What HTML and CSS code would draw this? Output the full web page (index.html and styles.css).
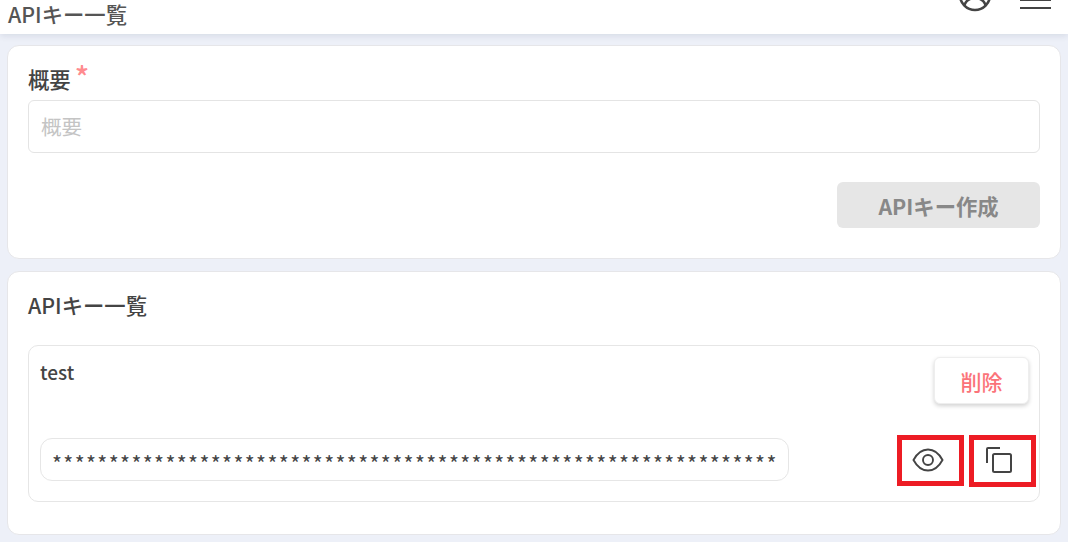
FILE: index.html
```html
<!DOCTYPE html>
<html lang="ja">
<head>
    <meta charset="UTF-8">
    <link rel="stylesheet" href="styles.css">
</head>
<body>
    <header class="top-bar">
        <span class="top-title">APIキー一覧</span>
        <div class="top-icons">
            <svg class="user-icon" width="34" height="34" viewBox="0 0 34 34" fill="none" stroke="#444" stroke-width="2.6">
                <circle cx="17" cy="17" r="15"/>
                <circle cx="17" cy="13" r="6"/>
                <path d="M6 28c2-6 7-8 11-8s9 2 11 8"/>
            </svg>
            <div class="menu-icon"><span></span><span></span></div>
        </div>
    </header>

    <main class="content">
        <section class="card card-form">
            <label class="field-label">概要<span class="required">*</span></label>
            <div class="text-input">概要</div>
            <div class="form-actions">
                <button class="create-btn">APIキー作成</button>
            </div>
        </section>

        <section class="card card-list">
            <h2 class="list-title">APIキー一覧</h2>
            <div class="key-item">
                <div class="key-top">
                    <span class="key-name">test</span>
                    <button class="delete-btn">削除</button>
                </div>
                <div class="key-bottom">
                    <div class="key-value">****************************************************************</div>
                    <div class="icon-box box-eye">
                        <svg width="32" height="32" viewBox="0 0 32 32" fill="none" stroke="#444" stroke-width="1.9">
                            <path d="M1.5 15C5 8.500 10 4.500 16 4.500S27 8.500 30.500 15C27 21.500 22 25.500 16 25.500S5 21.500 1.500 15Z"/>
                            <circle cx="16" cy="15" r="5"/>
                        </svg>
                    </div>
                    <div class="icon-box box-copy">
                        <svg width="30" height="30" viewBox="0 0 30 30" fill="none" stroke="#444" stroke-width="2">
                            <path d="M2 17V3a1 1 0 0 1 1-1H15"/>
                            <rect x="8" y="8" width="18" height="18" rx="1.500"/>
                        </svg>
                    </div>
                </div>
            </div>
        </section>
    </main>
</body>
</html>
```

FILE: styles.css
```css
* {
    box-sizing: border-box;
}
html, body {
    height: 100%;
}
body {
    margin: 0;
    background: #edf0f8;
    color: #444;
    font-family: "Noto Sans CJK JP", "Noto Sans", sans-serif;
    overflow: hidden;
}
.top-bar {
    height: 34px;
    background: #fff;
    display: flex;
    justify-content: space-between;
    align-items: flex-end;
    padding: 0 17px 0 8px;
    box-shadow: 0 2px 6px rgba(60,70,110,0.12);
    overflow: hidden;
}
.top-title {
    font-size: 21.33px;
    font-weight: 500;
    line-height: 26px;
    margin-bottom: 7px;
    color: #555;
}
.top-icons {
    display: flex;
    gap: 28px;
    margin-bottom: 23px;
    align-items: flex-end;
}
.user-icon {
    display: block;
    margin-bottom: -1px;
}
.menu-icon {
    width: 31px;
    display: flex;
    flex-direction: column;
    gap: 6px;
    margin-bottom: 2px;
}
.menu-icon span {
    display: block;
    height: 2px;
    background: #444;
}
.content {
    padding: 11px 7px 0;
    display: flex;
    flex-direction: column;
    gap: 12px;
}
.card {
    background: #fff;
    border: 1px solid #e6e6e9;
    border-radius: 12px;
    padding: 0 20px;
}
.card-form {
    height: 214px;
    padding-top: 17px;
}
.card-list {
    height: 264px;
    padding-top: 18px;
}
.field-label {
    display: block;
    font-size: 21.33px;
    font-weight: 500;
    line-height: 30px;
    height: 37px;
    padding-top: 1px;
}
.required {
    color: #ff8b8f;
    margin-left: 4px;
    font-size: 30px;
    line-height: 20px;
    vertical-align: -1px;
}
.text-input {
    height: 53px;
    border: 1px solid #e4e4e4;
    border-radius: 6px;
    padding: 0 12px;
    line-height: 51px;
    font-size: 20.5px;
    color: #c4c4c4;
}
.form-actions {
    display: flex;
    justify-content: flex-end;
    margin-top: 29px;
}
.create-btn {
    width: 203px;
    height: 46px;
    border: 0;
    border-radius: 6px;
    background: #e6e6e6;
    color: #888;
    font-family: inherit;
    font-size: 21.33px;
    font-weight: 700;
    padding: 0;
}
.list-title {
    margin: 0;
    font-size: 21.33px;
    font-weight: 500;
    line-height: 30px;
    color: #444;
}
.key-item {
    margin-top: 25px;
    height: 157px;
    border: 1px solid #e6e6e6;
    border-radius: 10px;
    padding: 11px 10px 0 11px;
}
.key-top {
    display: flex;
    justify-content: space-between;
    align-items: flex-start;
    height: 81px;
}
.key-name {
    font-size: 19px;
    font-weight: 500;
    line-height: 30px;
}
.delete-btn {
    width: 95px;
    height: 47px;
    background: #fff;
    border: 1px solid #eee;
    border-radius: 6px;
    box-shadow: 0 2px 4px rgba(0,0,0,0.18);
    color: #fb7379;
    font-family: inherit;
    font-size: 21px;
    font-weight: 500;
    padding: 0;
}
.key-bottom {
    display: flex;
    align-items: flex-start;
}
.key-value {
    flex: none;
    width: 749px;
    height: 43px;
    border: 1px solid #e6e6e6;
    border-radius: 12px;
    padding: 3px 11px 0;
    line-height: 41px;
    font-size: 21.33px;
    letter-spacing: 1.38px;
    white-space: nowrap;
    overflow: hidden;
}
.icon-box {
    flex: none;
    border: 5px solid #ed1c24;
    display: flex;
    align-items: center;
}
.box-eye {
    width: 67px;
    height: 51px;
    margin: -3px 0 0 108px;
    padding-left: 10px;
}
.box-copy {
    width: 67px;
    height: 52px;
    margin: -3px 0 0 5px;
    padding-left: 11px;
}
```
